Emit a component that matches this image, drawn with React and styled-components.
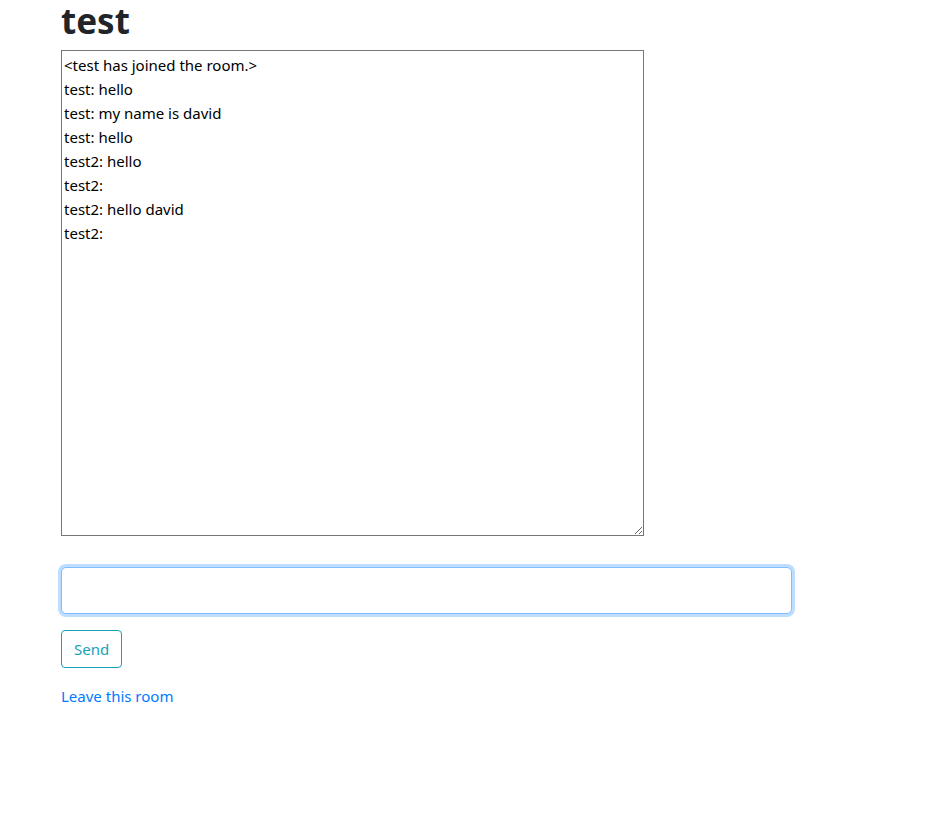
import styled, { createGlobalStyle } from "styled-components";

const messages = [
  "<test has joined the room.>",
  "test: hello",
  "test: my name is david",
  "test: hello",
  "test2: hello",
  "test2: ",
  "test2: hello david",
  "test2: ",
];

function App() {
  return (
    <>
      <GlobalStyle />
      <Page>
        <Title>test</Title>
        <ChatLog readOnly value={messages.join("\n")} />
        <MessageInput type="text" />
        <SendButton type="button">Send</SendButton>
        <LeaveLink href="#">Leave this room</LeaveLink>
      </Page>
    </>
  );
}

export default App;

const GlobalStyle = createGlobalStyle`
  body {
    margin: 0;
    background: #fff;
    color: #212529;
    font-family: "Noto Sans", "Open Sans", sans-serif;
    font-size: 15px;
    line-height: 24px;
  }
`;

const Page = styled.div`
  display: flex;
  flex-direction: column;
  align-items: flex-start;
  padding-left: 61px;
`;

const Title = styled.h1`
  margin: 0 0 8px;
  font-size: 35px;
  font-weight: 700;
  line-height: 42px;
  color: #212529;
`;

const ChatLog = styled.textarea`
  box-sizing: border-box;
  width: 583px;
  height: 486px;
  margin: 0 0 31px;
  padding: 2px;
  border: 1px solid #767676;
  font-family: inherit;
  font-size: 15px;
  line-height: 24px;
  color: #000;
  outline: none;
`;

const MessageInput = styled.input`
  box-sizing: border-box;
  width: 731px;
  height: 47px;
  margin: 0 0 16px;
  padding: 8px 16px;
  border: 1px solid #80bdff;
  border-radius: 5px;
  box-shadow: 0 0 0 3px rgba(0, 123, 255, 0.25);
  font-family: inherit;
  font-size: 19px;
  color: #495057;
  outline: none;
`;

const SendButton = styled.button`
  box-sizing: border-box;
  height: 38px;
  margin: 0 0 16px;
  padding: 6px 12px;
  border: 1px solid #17a2b8;
  border-radius: 4px;
  background: transparent;
  color: #17a2b8;
  font-family: inherit;
  font-size: 15px;
  line-height: 24px;
  cursor: pointer;
`;

const LeaveLink = styled.a`
  color: #007bff;
  text-decoration: none;
  font-size: 15px;
  line-height: 24px;
`;
